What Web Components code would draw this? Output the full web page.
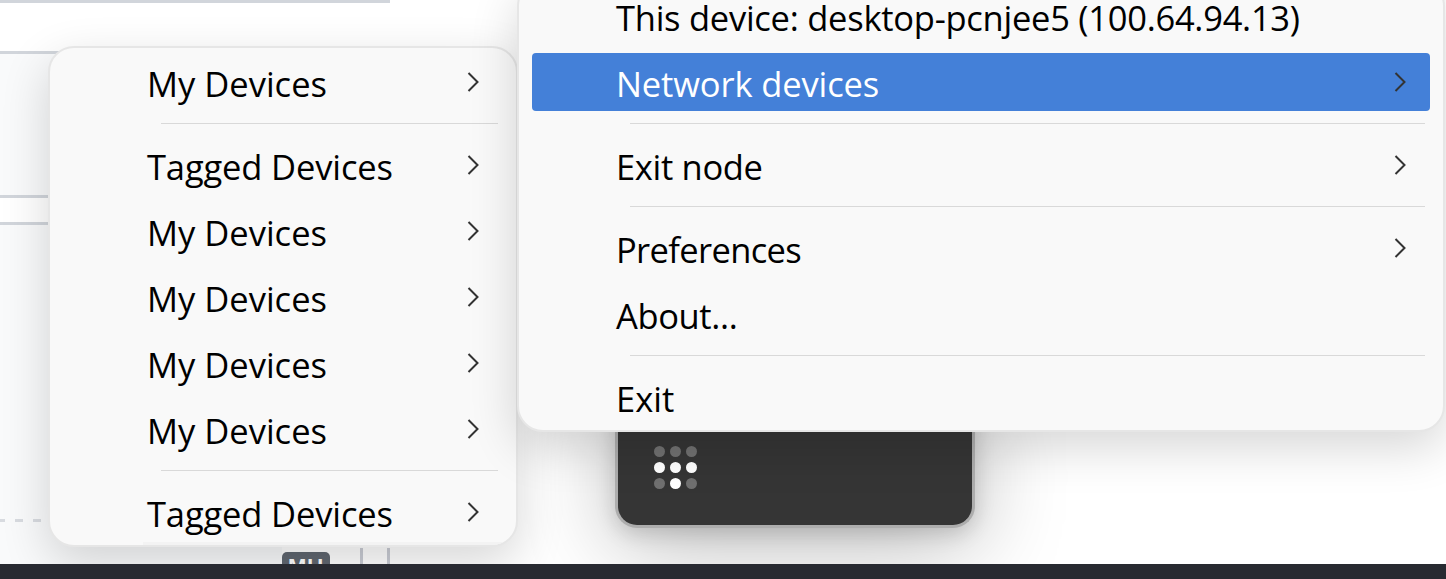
<!DOCTYPE html>
<html lang="en"><head><meta charset="utf-8"><title>Tray menu</title>
<style>
html,body{margin:0;padding:0;height:100%;background:#fff}
body{font-family:"Open Sans","Noto Sans",sans-serif;overflow:hidden}
</style></head>
<body>
<template id="t-item"><style>
:host{display:flex;flex:none;align-items:center;height:58px;margin:4px 13px;padding:0 23px 0 84px;border-radius:4px;box-sizing:border-box;color:#000}
:host([active]){background:#4480d8;color:#fff}
.l{flex:1;font-size:34.5px;line-height:58px;position:relative;top:2px;white-space:nowrap;letter-spacing:var(--ls,0)}
svg{display:block;width:14px;height:22px;flex:none;visibility:hidden}
:host([arrow]) svg{visibility:visible}
</style><span class="l"><slot></slot></span><svg viewBox="0 0 14 22" fill="none"><path d="M2.5 2 L11.5 11 L2.5 20" stroke="#333" stroke-width="2"/></svg></template>
<template id="t-sep"><style>
:host{display:block;flex:none;height:1px;background:#d9d9d9;margin:8px 18px 8px 111px}
</style></template>
<template id="t-menu"><style>
:host{display:flex;flex-direction:column;position:absolute;box-sizing:border-box;padding-top:1px;background:#f9f9f9;border:2px solid #e6e6e6;border-radius:26px;box-shadow:0 16px 48px rgba(0,0,0,.16);overflow:hidden}
.edge{display:none;position:absolute;left:93px;right:0;bottom:0;height:3px;background:#f3f3f3}
:host([edge]) .edge{display:block}
</style><slot></slot><div class="edge"></div></template>
<template id="t-tile"><style>
:host{display:block;position:absolute;box-sizing:border-box;background:#353535;border:3px solid #adadad;border-top:0;border-radius:0 0 22px 22px;box-shadow:0 16px 90px rgba(0,0,0,.28),0 6px 20px rgba(0,0,0,.15)}
.g{display:grid;grid-template-columns:repeat(3,11px);gap:5px;padding:46px 0 0 36px}
i{display:block;width:11px;height:11px;border-radius:50%;background:#707070}
i.on{background:#fff}
</style><div class="g"><i></i><i></i><i></i><i class="on"></i><i class="on"></i><i class="on"></i><i></i><i class="on"></i><i></i></div></template>
<template id="t-back"><style>
:host{display:flex;flex-direction:column;box-sizing:border-box;width:1446px;height:579px;padding-bottom:15px;background:#fff;overflow:hidden}
.top{width:390px;height:3px;background:#d1d5db;flex:none}
.mid{flex:1;display:flex;align-items:flex-end;min-height:0}
.panel{flex:none;align-self:flex-start;width:282px;margin-top:48px;height:513px;box-sizing:border-box;background:#f9fafb;border-top:3px solid #d1d5db}
.strip{height:30px;margin-top:141px;background:#fff;border-top:3px solid #d1d5db;border-bottom:3px solid #d1d5db;box-sizing:border-box}
.dash{width:41px;height:3px;margin-top:294px;background:repeating-linear-gradient(90deg,#d8dbe0 0 5px,transparent 5px 15px,#d8dbe0 15px 23px,transparent 23px 33px,#d8dbe0 33px 41px)}
.b{flex:none;width:48px;height:12px;padding-top:3px;box-sizing:border-box;background:#606770;border-radius:5px 5px 0 0;color:#fff;font:700 22px/24px "Liberation Sans",sans-serif;letter-spacing:1px;text-align:center;overflow:hidden}
.v{flex:none;width:3px;height:16px;background:#c9ccd4;margin-left:30px}
.v+.v{margin-left:24px}
</style><div class="top"></div><div class="mid"><div class="panel"><div class="strip"></div><div class="dash"></div></div><div class="b">MU</div><div class="v"></div><div class="v"></div></div></template>
<template id="t-foot"><style>
:host{display:block;position:absolute;left:0;right:0;bottom:0;height:15px;background:#282a31}
</style></template>

<x-desktop>
<x-backdrop></x-backdrop>
<x-tile style="left:615px;top:400px;width:360px;height:128px"></x-tile>
<x-menu edge style="left:48px;top:46px;width:470px;height:501px">
 <x-item arrow>My Devices</x-item><x-sep></x-sep>
 <x-item arrow style="--ls:-.14px">Tagged Devices</x-item>
 <x-item arrow>My Devices</x-item>
 <x-item arrow>My Devices</x-item>
 <x-item arrow>My Devices</x-item>
 <x-item arrow>My Devices</x-item><x-sep></x-sep>
 <x-item arrow style="--ls:-.14px">Tagged Devices</x-item>
</x-menu>
<x-menu style="left:517px;top:-20px;width:928px;height:452px">
 <x-item style="--ls:-.26px">This device: desktop-pcnjee5 (100.64.94.13)</x-item>
 <x-item arrow active style="--ls:-.13px">Network devices</x-item><x-sep></x-sep>
 <x-item arrow style="--ls:-.33px">Exit node</x-item><x-sep></x-sep>
 <x-item arrow style="--ls:-.64px">Preferences</x-item>
 <x-item style="--ls:-.37px">About...</x-item><x-sep></x-sep>
 <x-item>Exit</x-item>
</x-menu>
<x-foot></x-foot>
</x-desktop>
<script>
function def(name,tpl){
  customElements.define(name,class extends HTMLElement{
    constructor(){super();this.attachShadow({mode:"open"}).appendChild(document.getElementById(tpl).content.cloneNode(true));}
  });
}
def("x-item","t-item");def("x-sep","t-sep");def("x-menu","t-menu");def("x-tile","t-tile");def("x-backdrop","t-back");def("x-foot","t-foot");
customElements.define("x-desktop",class extends HTMLElement{
  constructor(){super();const s=this.attachShadow({mode:"open"});s.innerHTML='<style>:host{display:block;position:relative;width:1446px;height:579px;overflow:hidden}</style><slot></slot>';}
});
</script>
</body></html>
